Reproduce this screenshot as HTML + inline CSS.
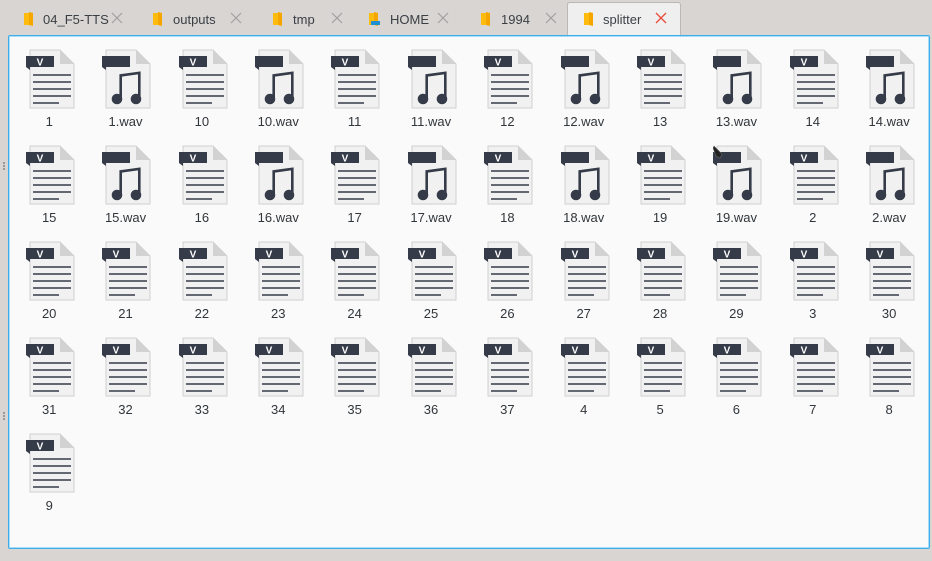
<!DOCTYPE html>
<html><head><meta charset="utf-8"><style>
html,body{margin:0;padding:0}
body{width:932px;height:561px;background:#d9d5d3;position:relative;overflow:hidden;font-family:"Liberation Sans","DejaVu Sans",sans-serif;color:#31363b}
.tabs{position:absolute;left:8px;top:3px;height:32px}
.tab{position:absolute;top:0;height:31px;background:#d9d5d3;border-right:1px solid #c6c2c0;font-size:13px;color:#3a3f44}
.tab .lbl{position:absolute;top:9px}
.tab .ic{position:absolute;left:14px;top:8px}
.tab .x{position:absolute;top:8px}
.tab.act{background:#f0efef;border:1px solid #bcb8b6;border-bottom:none;border-radius:3px 3px 0 0;top:-1px;height:33px}
.panel{position:absolute;left:8px;top:35px;width:920px;height:512px;border:1px solid #3daee9;box-shadow:inset 0 0 0 1px #a9dcf6;background:#fafafa;border-radius:2px}
.grid{position:absolute;left:11px;top:47px;display:grid;grid-template-columns:repeat(12,76.36px);grid-auto-rows:96px}
.c{position:relative}
.c svg{position:absolute;left:15px;top:2px}
.c span{position:absolute;left:0;right:0;top:67px;text-align:center;font-size:13px;color:#31363b}
.grip{position:absolute;left:3px;width:2px;height:8px;border-left:2px dotted #999}
</style></head><body>
<svg width="0" height="0" style="position:absolute">
<defs>
<symbol id="pg" viewBox="0 0 50 60">
<path d="M4 1H34L48 15V59H4Z" fill="#f1f1f1" stroke="#d0d0d0" stroke-width="1"/>
<path d="M34 1V15H48Z" fill="#d2d2d2"/>
<path d="M0 7H28V18H4V21L0 18Z" fill="#353b48"/>
</symbol>
<symbol id="doc" viewBox="0 0 50 60">
<use href="#pg"/>
<text x="14" y="16.5" font-family="Liberation Sans" font-weight="bold" font-size="10" fill="#fff" text-anchor="middle">V</text>
<g stroke="#353b48" stroke-width="1.6"><path d="M7 26H45M7 33H45M7 40H45M7 47H45M7 54H33"/></g>
</symbol>
<symbol id="wav" viewBox="0 0 50 60">
<use href="#pg"/>
<g fill="#353b48"><circle cx="15" cy="50" r="5.3"/><circle cx="34" cy="50" r="5.3"/>
<path d="M17.4 50V25.2L38.6 22.4V50H36V25.4L20 27.6V50Z"/></g>
</symbol>
<symbol id="fold" viewBox="0 0 14 16"><path d="M2 2H7V14H2Z" fill="#fdbc0d"/><path d="M7 1L11 2V15L7 14Z" fill="#f5a700"/></symbol>
</defs></svg>

<div class="tabs">
<div class="tab" style="left:0;width:129px"><svg class="ic" width="14" height="16"><use href="#fold"/></svg><span class="lbl" style="left:35px">04_F5-TTS</span><svg class="x" style="left:102px" width="14" height="14"><path d="M2 2L12 12M12 2L2 12" stroke="#a0a0a0" stroke-width="1.2"/></svg></div>
<div class="tab" style="left:129px;width:120px"><svg class="ic" width="14" height="16"><use href="#fold"/></svg><span class="lbl" style="left:36px">outputs</span><svg class="x" style="left:92px" width="14" height="14"><path d="M2 2L12 12M12 2L2 12" stroke="#a0a0a0" stroke-width="1.2"/></svg></div>
<div class="tab" style="left:249px;width:96px"><svg class="ic" width="14" height="16"><use href="#fold"/></svg><span class="lbl" style="left:36px">tmp</span><svg class="x" style="left:73px" width="14" height="14"><path d="M2 2L12 12M12 2L2 12" stroke="#a0a0a0" stroke-width="1.2"/></svg></div>
<div class="tab" style="left:345px;width:112px"><svg class="ic" width="14" height="16"><use href="#fold"/><rect x="4" y="10" width="9" height="4" fill="#1d8fd3"/></svg><span class="lbl" style="left:37px">HOME</span><svg class="x" style="left:83px" width="14" height="14"><path d="M2 2L12 12M12 2L2 12" stroke="#a0a0a0" stroke-width="1.2"/></svg></div>
<div class="tab" style="left:457px;width:102px"><svg class="ic" width="14" height="16"><use href="#fold"/></svg><span class="lbl" style="left:36px">1994</span><svg class="x" style="left:79px" width="14" height="14"><path d="M2 2L12 12M12 2L2 12" stroke="#a0a0a0" stroke-width="1.2"/></svg></div>
<div class="tab act" style="left:559px;width:112px"><svg class="ic" width="14" height="16"><use href="#fold"/></svg><span class="lbl" style="left:35px">splitter</span><svg class="x" style="left:86px" width="14" height="14"><path d="M2 2L12 12M12 2L2 12" stroke="#e74c3c" stroke-width="1.3"/></svg></div>
</div>
<div class="grip" style="top:162px"></div><div class="grip" style="top:412px"></div>
<div class="panel"></div>
<div class="grid">
<div class="c"><svg width="50" height="60"><use href="#doc"/></svg><span>1</span></div>
<div class="c"><svg width="50" height="60"><use href="#wav"/></svg><span>1.wav</span></div>
<div class="c"><svg width="50" height="60"><use href="#doc"/></svg><span>10</span></div>
<div class="c"><svg width="50" height="60"><use href="#wav"/></svg><span>10.wav</span></div>
<div class="c"><svg width="50" height="60"><use href="#doc"/></svg><span>11</span></div>
<div class="c"><svg width="50" height="60"><use href="#wav"/></svg><span>11.wav</span></div>
<div class="c"><svg width="50" height="60"><use href="#doc"/></svg><span>12</span></div>
<div class="c"><svg width="50" height="60"><use href="#wav"/></svg><span>12.wav</span></div>
<div class="c"><svg width="50" height="60"><use href="#doc"/></svg><span>13</span></div>
<div class="c"><svg width="50" height="60"><use href="#wav"/></svg><span>13.wav</span></div>
<div class="c"><svg width="50" height="60"><use href="#doc"/></svg><span>14</span></div>
<div class="c"><svg width="50" height="60"><use href="#wav"/></svg><span>14.wav</span></div>
<div class="c"><svg width="50" height="60"><use href="#doc"/></svg><span>15</span></div>
<div class="c"><svg width="50" height="60"><use href="#wav"/></svg><span>15.wav</span></div>
<div class="c"><svg width="50" height="60"><use href="#doc"/></svg><span>16</span></div>
<div class="c"><svg width="50" height="60"><use href="#wav"/></svg><span>16.wav</span></div>
<div class="c"><svg width="50" height="60"><use href="#doc"/></svg><span>17</span></div>
<div class="c"><svg width="50" height="60"><use href="#wav"/></svg><span>17.wav</span></div>
<div class="c"><svg width="50" height="60"><use href="#doc"/></svg><span>18</span></div>
<div class="c"><svg width="50" height="60"><use href="#wav"/></svg><span>18.wav</span></div>
<div class="c"><svg width="50" height="60"><use href="#doc"/></svg><span>19</span></div>
<div class="c"><svg width="50" height="60"><use href="#wav"/><path d="M0 3L1 1L9 9L7 13L3 11Z" fill="#222" stroke="#666" stroke-width="0.6"/></svg><span>19.wav</span></div>
<div class="c"><svg width="50" height="60"><use href="#doc"/></svg><span>2</span></div>
<div class="c"><svg width="50" height="60"><use href="#wav"/></svg><span>2.wav</span></div>
<div class="c"><svg width="50" height="60"><use href="#doc"/></svg><span>20</span></div>
<div class="c"><svg width="50" height="60"><use href="#doc"/></svg><span>21</span></div>
<div class="c"><svg width="50" height="60"><use href="#doc"/></svg><span>22</span></div>
<div class="c"><svg width="50" height="60"><use href="#doc"/></svg><span>23</span></div>
<div class="c"><svg width="50" height="60"><use href="#doc"/></svg><span>24</span></div>
<div class="c"><svg width="50" height="60"><use href="#doc"/></svg><span>25</span></div>
<div class="c"><svg width="50" height="60"><use href="#doc"/></svg><span>26</span></div>
<div class="c"><svg width="50" height="60"><use href="#doc"/></svg><span>27</span></div>
<div class="c"><svg width="50" height="60"><use href="#doc"/></svg><span>28</span></div>
<div class="c"><svg width="50" height="60"><use href="#doc"/></svg><span>29</span></div>
<div class="c"><svg width="50" height="60"><use href="#doc"/></svg><span>3</span></div>
<div class="c"><svg width="50" height="60"><use href="#doc"/></svg><span>30</span></div>
<div class="c"><svg width="50" height="60"><use href="#doc"/></svg><span>31</span></div>
<div class="c"><svg width="50" height="60"><use href="#doc"/></svg><span>32</span></div>
<div class="c"><svg width="50" height="60"><use href="#doc"/></svg><span>33</span></div>
<div class="c"><svg width="50" height="60"><use href="#doc"/></svg><span>34</span></div>
<div class="c"><svg width="50" height="60"><use href="#doc"/></svg><span>35</span></div>
<div class="c"><svg width="50" height="60"><use href="#doc"/></svg><span>36</span></div>
<div class="c"><svg width="50" height="60"><use href="#doc"/></svg><span>37</span></div>
<div class="c"><svg width="50" height="60"><use href="#doc"/></svg><span>4</span></div>
<div class="c"><svg width="50" height="60"><use href="#doc"/></svg><span>5</span></div>
<div class="c"><svg width="50" height="60"><use href="#doc"/></svg><span>6</span></div>
<div class="c"><svg width="50" height="60"><use href="#doc"/></svg><span>7</span></div>
<div class="c"><svg width="50" height="60"><use href="#doc"/></svg><span>8</span></div>
<div class="c"><svg width="50" height="60"><use href="#doc"/></svg><span>9</span></div>
</div>
</body></html>
